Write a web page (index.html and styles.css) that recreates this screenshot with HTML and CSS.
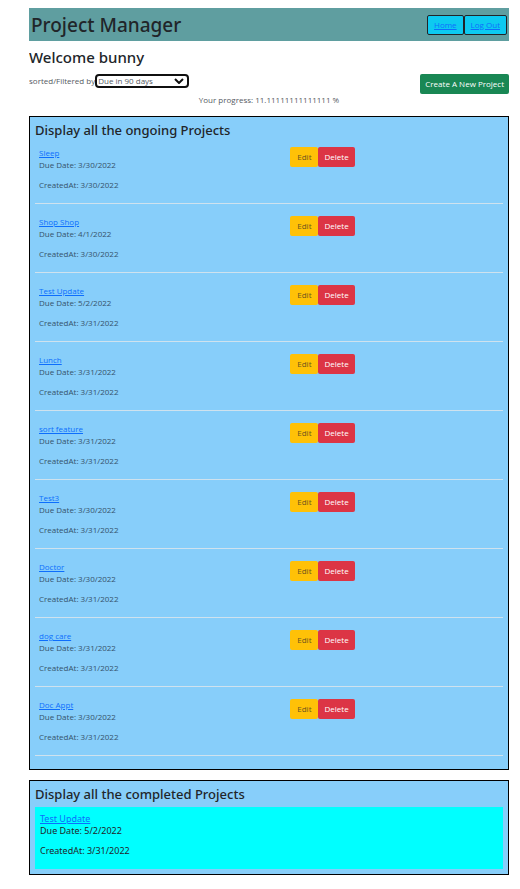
FILE: index.html
```
<!DOCTYPE html>
<html lang="en">
<head>
<meta charset="utf-8">
<meta name="viewport" content="width=device-width, initial-scale=1">
<title>Project Manager</title>
<link rel="stylesheet" href="styles.css">
</head>
<body>
<header class="topbar">
  <h1>Project Manager</h1>
  <nav class="topnav">
    <a href="#home">Home</a>
    <a href="#logout">Log Out</a>
  </nav>
</header>
<main>
  <h2 class="welcome">Welcome bunny</h2>
  <div class="toolbar">
    <div class="filter">
      <label for="sort">sorted/Filtered by</label>
      <span class="select-wrap">
        <select id="sort"><option>Due in 90 days</option></select>
        <svg class="chevron" viewBox="0 0 10 6" aria-hidden="true"><path d="M1 1l4 4 4-4"/></svg>
      </span>
    </div>
    <button class="btn create" type="button">Create A New Project</button>
  </div>
  <p class="progress">Your progress: 11.11111111111111 %</p>

  <section class="panel ongoing">
    <h3>Display all the ongoing Projects</h3>
    <article class="project">
      <div class="info"><a href="#p1">Sleep</a><p>Due Date: 3/30/2022</p><p>CreatedAt: 3/30/2022</p></div>
      <div class="actions"><button class="btn edit" type="button">Edit</button><button class="btn delete" type="button">Delete</button></div>
    </article>
    <article class="project">
      <div class="info"><a href="#p2">Shop Shop</a><p>Due Date: 4/1/2022</p><p>CreatedAt: 3/30/2022</p></div>
      <div class="actions"><button class="btn edit" type="button">Edit</button><button class="btn delete" type="button">Delete</button></div>
    </article>
    <article class="project">
      <div class="info"><a href="#p3">Test Update</a><p>Due Date: 5/2/2022</p><p>CreatedAt: 3/31/2022</p></div>
      <div class="actions"><button class="btn edit" type="button">Edit</button><button class="btn delete" type="button">Delete</button></div>
    </article>
    <article class="project">
      <div class="info"><a href="#p4">Lunch</a><p>Due Date: 3/31/2022</p><p>CreatedAt: 3/31/2022</p></div>
      <div class="actions"><button class="btn edit" type="button">Edit</button><button class="btn delete" type="button">Delete</button></div>
    </article>
    <article class="project">
      <div class="info"><a href="#p5">sort feature</a><p>Due Date: 3/31/2022</p><p>CreatedAt: 3/31/2022</p></div>
      <div class="actions"><button class="btn edit" type="button">Edit</button><button class="btn delete" type="button">Delete</button></div>
    </article>
    <article class="project">
      <div class="info"><a href="#p6">Test3</a><p>Due Date: 3/30/2022</p><p>CreatedAt: 3/31/2022</p></div>
      <div class="actions"><button class="btn edit" type="button">Edit</button><button class="btn delete" type="button">Delete</button></div>
    </article>
    <article class="project">
      <div class="info"><a href="#p7">Doctor</a><p>Due Date: 3/30/2022</p><p>CreatedAt: 3/31/2022</p></div>
      <div class="actions"><button class="btn edit" type="button">Edit</button><button class="btn delete" type="button">Delete</button></div>
    </article>
    <article class="project">
      <div class="info"><a href="#p8">dog care</a><p>Due Date: 3/31/2022</p><p>CreatedAt: 3/31/2022</p></div>
      <div class="actions"><button class="btn edit" type="button">Edit</button><button class="btn delete" type="button">Delete</button></div>
    </article>
    <article class="project">
      <div class="info"><a href="#p9">Doc Appt</a><p>Due Date: 3/30/2022</p><p>CreatedAt: 3/31/2022</p></div>
      <div class="actions"><button class="btn edit" type="button">Edit</button><button class="btn delete" type="button">Delete</button></div>
    </article>
  </section>

  <section class="panel">
    <h3>Display all the completed Projects</h3>
    <article class="done info"><a href="#p3">Test Update</a><p>Due Date: 5/2/2022</p><p>CreatedAt: 3/31/2022</p></article>
  </section>
</main>
</body>
</html>
```

FILE: styles.css
```
* { box-sizing: border-box; }

body {
  margin: 8px 11px 14px 29px;
  background: #fff;
  color: #212529;
  font-family: "Open Sans", "Noto Sans", sans-serif;
  font-size: 8px;
  line-height: 12px;
}

h1, h2, h3, p { margin: 0; }

h1, h2, h3 {
  font-family: "Noto Sans", "Open Sans", sans-serif;
  font-weight: 500;
}

a { color: #0d6efd; }

.topbar {
  display: flex;
  align-items: center;
  justify-content: space-between;
  height: 33px;
  padding: 0 2px;
  background: #5f9ea0;
}

.topbar h1 { font-size: 19px; line-height: 24px; }

.topnav { display: flex; }

.topnav a {
  padding: 3px 6px;
  border: 1px solid #212529;
  border-radius: 2px;
  background: #0dcaf0;
  line-height: 12px;
}

.welcome {
  margin-top: 6px;
  font-size: 15px;
  line-height: 20px;
}

.toolbar {
  display: flex;
  align-items: flex-start;
  justify-content: space-between;
  margin-top: 7px;
}

.filter {
  display: flex;
  align-items: center;
  color: #555a5f;
}

.select-wrap { position: relative; display: flex; }

select {
  width: 94px;
  height: 14px;
  padding: 0 12px 0 1px;
  appearance: none;
  border: 2px solid #101010;
  border-radius: 4px;
  background: #fff;
  color: #555a5f;
  font: inherit;
  line-height: 10px;
}

.chevron {
  position: absolute;
  top: 4px;
  right: 5px;
  width: 10px;
  height: 6px;
  fill: none;
  stroke: #101010;
  stroke-width: 2;
  pointer-events: none;
}

.btn {
  height: 20px;
  padding: 0 7px;
  border: 0;
  border-radius: 2px;
  color: #fff;
  font: inherit;
}

.create { padding: 0 5px; background: #198754; font-weight: 500; }
.edit { background: #ffc107; color: #6b5420; }
.delete { padding: 0 6px; background: #dc3545; font-weight: 500; }

.progress { color: #555a5f; text-align: center; }

.panel {
  margin-top: 10px;
  padding: 5px;
  border: 1px solid #000;
  background: #87cefa;
}

.panel h3 { font-size: 13px; line-height: 16px; }

.ongoing { padding-bottom: 13px; }
.ongoing h3 { margin-bottom: -3px; }

.project {
  display: grid;
  grid-template-columns: 6fr 5fr;
  padding: 12px 0;
  border-bottom: 1px solid #cfe2ee;
  color: #36536a;
}

.info a { display: table; }
.info p + p { margin-top: 8px; }
.project .info { padding-left: 4px; }

.actions { display: flex; align-items: flex-start; }

.done {
  margin-top: 5px;
  padding: 6px 5px 12px;
  background: #00ffff;
  font-family: "Noto Sans", "Open Sans", sans-serif;
  font-size: 9px;
}
```
